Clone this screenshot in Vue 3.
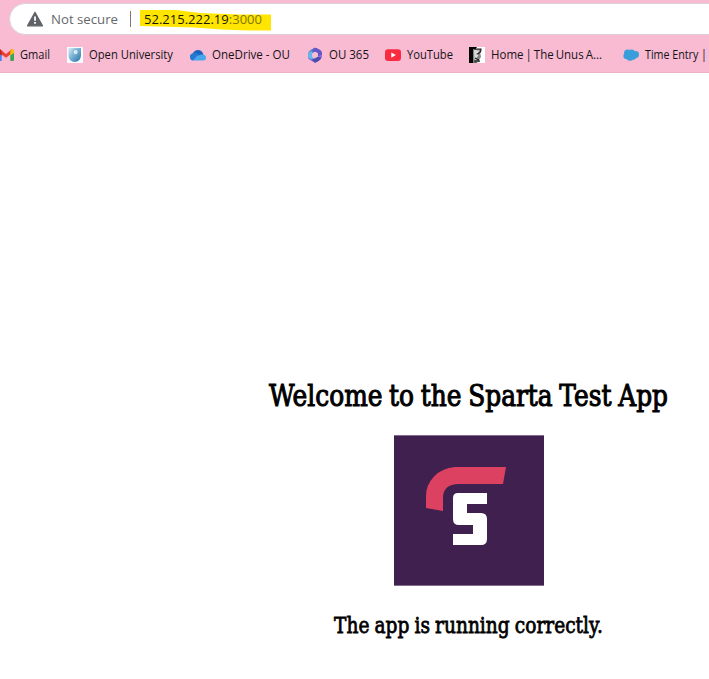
<script setup>
const bookmarks = [
  { icon: 'gmail', label: 'Gmail', width: 30, slot: 69 },
  { icon: 'ou', label: 'Open University', width: 84, slot: 123 },
  { icon: 'cloud', label: 'OneDrive - OU', width: 78, slot: 117 },
  { icon: 'office', label: 'OU 365', width: 40, slot: 78 },
  { icon: 'youtube', label: 'YouTube', width: 46, slot: 84 },
  { icon: 'home', label: 'Home | The Unus A...', width: 111, slot: 154 },
  { icon: 'sales', label: 'Time Entry |', width: 62, slot: 86 },
]
</script>

<template>
  <div class="page">
    <header class="chrome">
      <div class="address">
        <svg class="warning" width="18" height="16" viewBox="0 0 18 16">
          <path d="M9 1.2 16.5 14.8H1.5Z" fill="#5f6368" stroke="#5f6368" stroke-width="1.2" stroke-linejoin="round" />
          <path d="M8.1 5.5h1.8v4.3H8.1zM8.1 11h1.8v1.8H8.1z" fill="#fff" />
        </svg>
        <svg class="status" width="70" height="24">
          <text x="0" y="17" textLength="67" lengthAdjust="spacingAndGlyphs">Not secure</text>
        </svg>
        <span class="divider"></span>
        <svg class="url" width="134" height="24">
          <path d="M1 3 37 3 61 6 100 7.500 132 7.500V23.500L110 23.500 83 22.500 55 20.500 1 19Z" fill="#ffe500" />
          <text x="5" y="17" textLength="118" lengthAdjust="spacingAndGlyphs">52.215.222.19<tspan class="port">:3000</tspan></text>
        </svg>
      </div>
      <nav class="bookmarks">
        <a v-for="b in bookmarks" :key="b.label" class="bookmark" :class="b.icon" :style="{ width: b.slot + 'px' }">
          <svg class="icon" width="16" height="16" viewBox="0 0 16 16">
            <g v-if="b.icon === 'gmail'">
              <path d="M0 3.500h3.700V14H1.300Q0 14 0 12.700Z" fill="#4285f4" />
              <path d="M12.300 3.500H16v9.200Q16 14 14.700 14h-2.400Z" fill="#34a853" />
              <path d="M0 4Q0 2 2 2L8 7 14 2v4.200L8 10.800 0 5Z" fill="#ea4335" />
              <path d="M12.300 3.500 14 2Q16 2 16 4v2l-3.700 2.500Z" fill="#fbbc04" />
              <path d="M0 4v2l3.700 2.600V5L2 2Q0 2 0 4Z" fill="#c5221f" />
            </g>
            <g v-else-if="b.icon === 'ou'">
              <defs>
                <linearGradient id="ouBlue" x1="0" y1="0" x2="1" y2="1">
                  <stop offset="0" stop-color="#d7edf8" />
                  <stop offset=".5" stop-color="#70add2" />
                  <stop offset="1" stop-color="#286f9f" />
                </linearGradient>
              </defs>
              <path d="M0 0h16v16H0z" fill="#f9fcfe" />
              <path d="M1.500 1H14v7.500Q13.500 15 7.700 15T1.500 8.500Z" fill="url(#ouBlue)" />
              <circle cx="8.500" cy="5" r="2.500" fill="#d8edf7" stroke="#6098bf" stroke-width=".6" />
            </g>
            <g v-else-if="b.icon === 'cloud'">
              <path d="M2.500 7Q4.500 2.700 8.500 3T13.500 8l-5 4L0 10Q.2 7 2.500 7Z" fill="#1765bd" />
              <path d="M3.600 6Q5.300 5.200 7 6.200L11.500 9 3 13.500Q0 13.300 0 10 .2 6.500 3.600 6Z" fill="#2378d0" />
              <path d="m7 9 4.300-1.500q4.500-.3 4.700 2.800 0 3.200-3 3.200H3Z" fill="#48a6ed" />
            </g>
            <g v-else-if="b.icon === 'office'">
              <path d="M7.500.8 3.500 3Q1 4.500 1 7.500v3.500l3.500 1 .7-6L9.400 4 10 1.500Z" fill="#4d80cb" />
              <path d="M7.500.8q-2 1.200-1.700 4.300L8 4.500l3 1.700v3.500l4-1.700V5.800Q15 4 12.500 2.600L9.500 1Z" fill="#6556c5" />
              <path d="M5 6v3.700L8 12l-3.500 1.500L1 11V7.500Q1 5 5 4Z" fill="#65b7eb" />
              <path d="m1 10.500 3.500 1.700L8 11.500l3-1.800 4-2V9q0 2.700-3 4.500l-4 2.200-4-2.100Q1 12 1 10.500Z" fill="#8b67df" />
              <path d="m4.500 12.800 3.500-1.300 3-1.800 3.500 1Q13 13.800 8 15.700Z" fill="#4c4bae" />
            </g>
            <g v-else-if="b.icon === 'youtube'">
              <rect y="2.300" width="16" height="11.600" rx="3" fill="#f92b40" />
              <path d="M6.300 5.500 10.800 8.100 6.300 10.700Z" fill="#fff" />
            </g>
            <g v-else-if="b.icon === 'home'">
              <path d="M0 0h16v16H0z" fill="#fff" />
              <path d="M0 0h8L6 3v10l2 3H0Z" fill="#050505" />
              <path d="M4 2h8l-1 3 1 5-2 3 1 2-7 1Z" fill="#858585" />
              <path d="m5 3 5 .5-.5 2-3 1.500 3 1-2 3 2 1-4 1Z" fill="#ddd" />
              <path d="M5 2h7l-.5 3-3 2M6 11l4 2M5 14h6" fill="none" stroke="#191919" stroke-width="1.200" />
            </g>
            <g v-else fill="#399edb">
              <circle cx="4.500" cy="6" r="3.500" />
              <circle cx="8.600" cy="6" r="3.500" />
              <circle cx="12.500" cy="7.500" r="3.500" />
              <circle cx="3.500" cy="9" r="3.100" />
              <circle cx="7" cy="10" r="3.800" />
              <circle cx="10" cy="9.500" r="3.200" />
            </g>
          </svg>
          <svg class="label" :width="b.width + 2" height="20">
            <text x="0" y="14" :textLength="b.width" lengthAdjust="spacingAndGlyphs">{{ b.label }}</text>
          </svg>
        </a>
      </nav>
    </header>
    <main class="content">
      <h1>
        <svg width="404" height="44">
          <text x="2" y="29" textLength="399" lengthAdjust="spacingAndGlyphs">Welcome to the Sparta Test App</text>
        </svg>
      </h1>
      <svg class="logo" width="150" height="151" viewBox="0 0 150 151">
        <path d="M0 0h150v151H0z" fill="#40204f" />
        <path d="M0 .5h150M0 150.500h150" stroke="#b9acbf" stroke-opacity=".55" />
        <path d="M32 73V61Q32 50 40 41.500T61 32h51l-3 17H65q-16 0-16 14v13Z" fill="#dc4161" />
        <path d="M64 58h29v11H73v9h14q6 0 6 6v20q0 6-6 6H59V99h20v-9H65q-6 0-6-6V63q0-5 5-5Z" fill="#fff" />
      </svg>
      <h2>
        <svg width="272" height="36">
          <text x="1" y="24" textLength="269" lengthAdjust="spacingAndGlyphs">The app is running correctly.</text>
        </svg>
      </h2>
    </main>
  </div>
</template>

<style>
body { background: #fff; overflow: hidden; }
</style>

<style scoped>
.page { width: 709px; height: 679px; overflow: hidden; background: #fff; }
.chrome { box-sizing: border-box; height: 73px; padding-top: 3px; background: #f8bbd2; border-bottom: 1px solid #ecb2c8; }
.address { display: flex; align-items: center; box-sizing: border-box; width: 740px; height: 32px; margin-left: 9px; padding-left: 16px; border: 1px solid #dcd2d6; border-radius: 16px; background: #fff; }
.warning { margin-top: -1px; }
.status { margin-left: 7px; font: 13.500px "Open Sans", sans-serif; fill: #65686c; }
.divider { width: 1px; height: 16px; margin-left: 9px; background: #777; }
.url { margin-left: 8px; font: 13.500px "Open Sans", sans-serif; fill: #171500; }
.port { fill: #827600; }
.bookmarks { display: flex; height: 20px; margin-top: 10px; margin-left: -2px; }
.bookmark { display: flex; flex: none; align-items: center; color: #171317; }
.bookmark .icon { flex: none; }
.label { flex: none; margin-left: 6px; overflow: visible; font: 12px "Open Sans", sans-serif; fill: currentColor; }
.home .label { word-spacing: -1px; }
.content { display: flex; flex-direction: column; align-items: center; box-sizing: border-box; width: 709px; padding-top: 304px; padding-left: 229px; }
h1, h2 { margin: 0; font-family: "DejaVu Serif", serif; font-weight: 400; color: #000; }
h1 svg, h2 svg { display: block; overflow: visible; fill: currentColor; stroke: currentColor; }
h1 { font-size: 30px; word-spacing: -1.5px; }
h1 svg { stroke-width: 1.1; }
h2 { font-size: 22.500px; word-spacing: -1px; }
h2 svg { stroke-width: .8; }
.logo { margin-top: 14px; margin-bottom: 23px; }
</style>
